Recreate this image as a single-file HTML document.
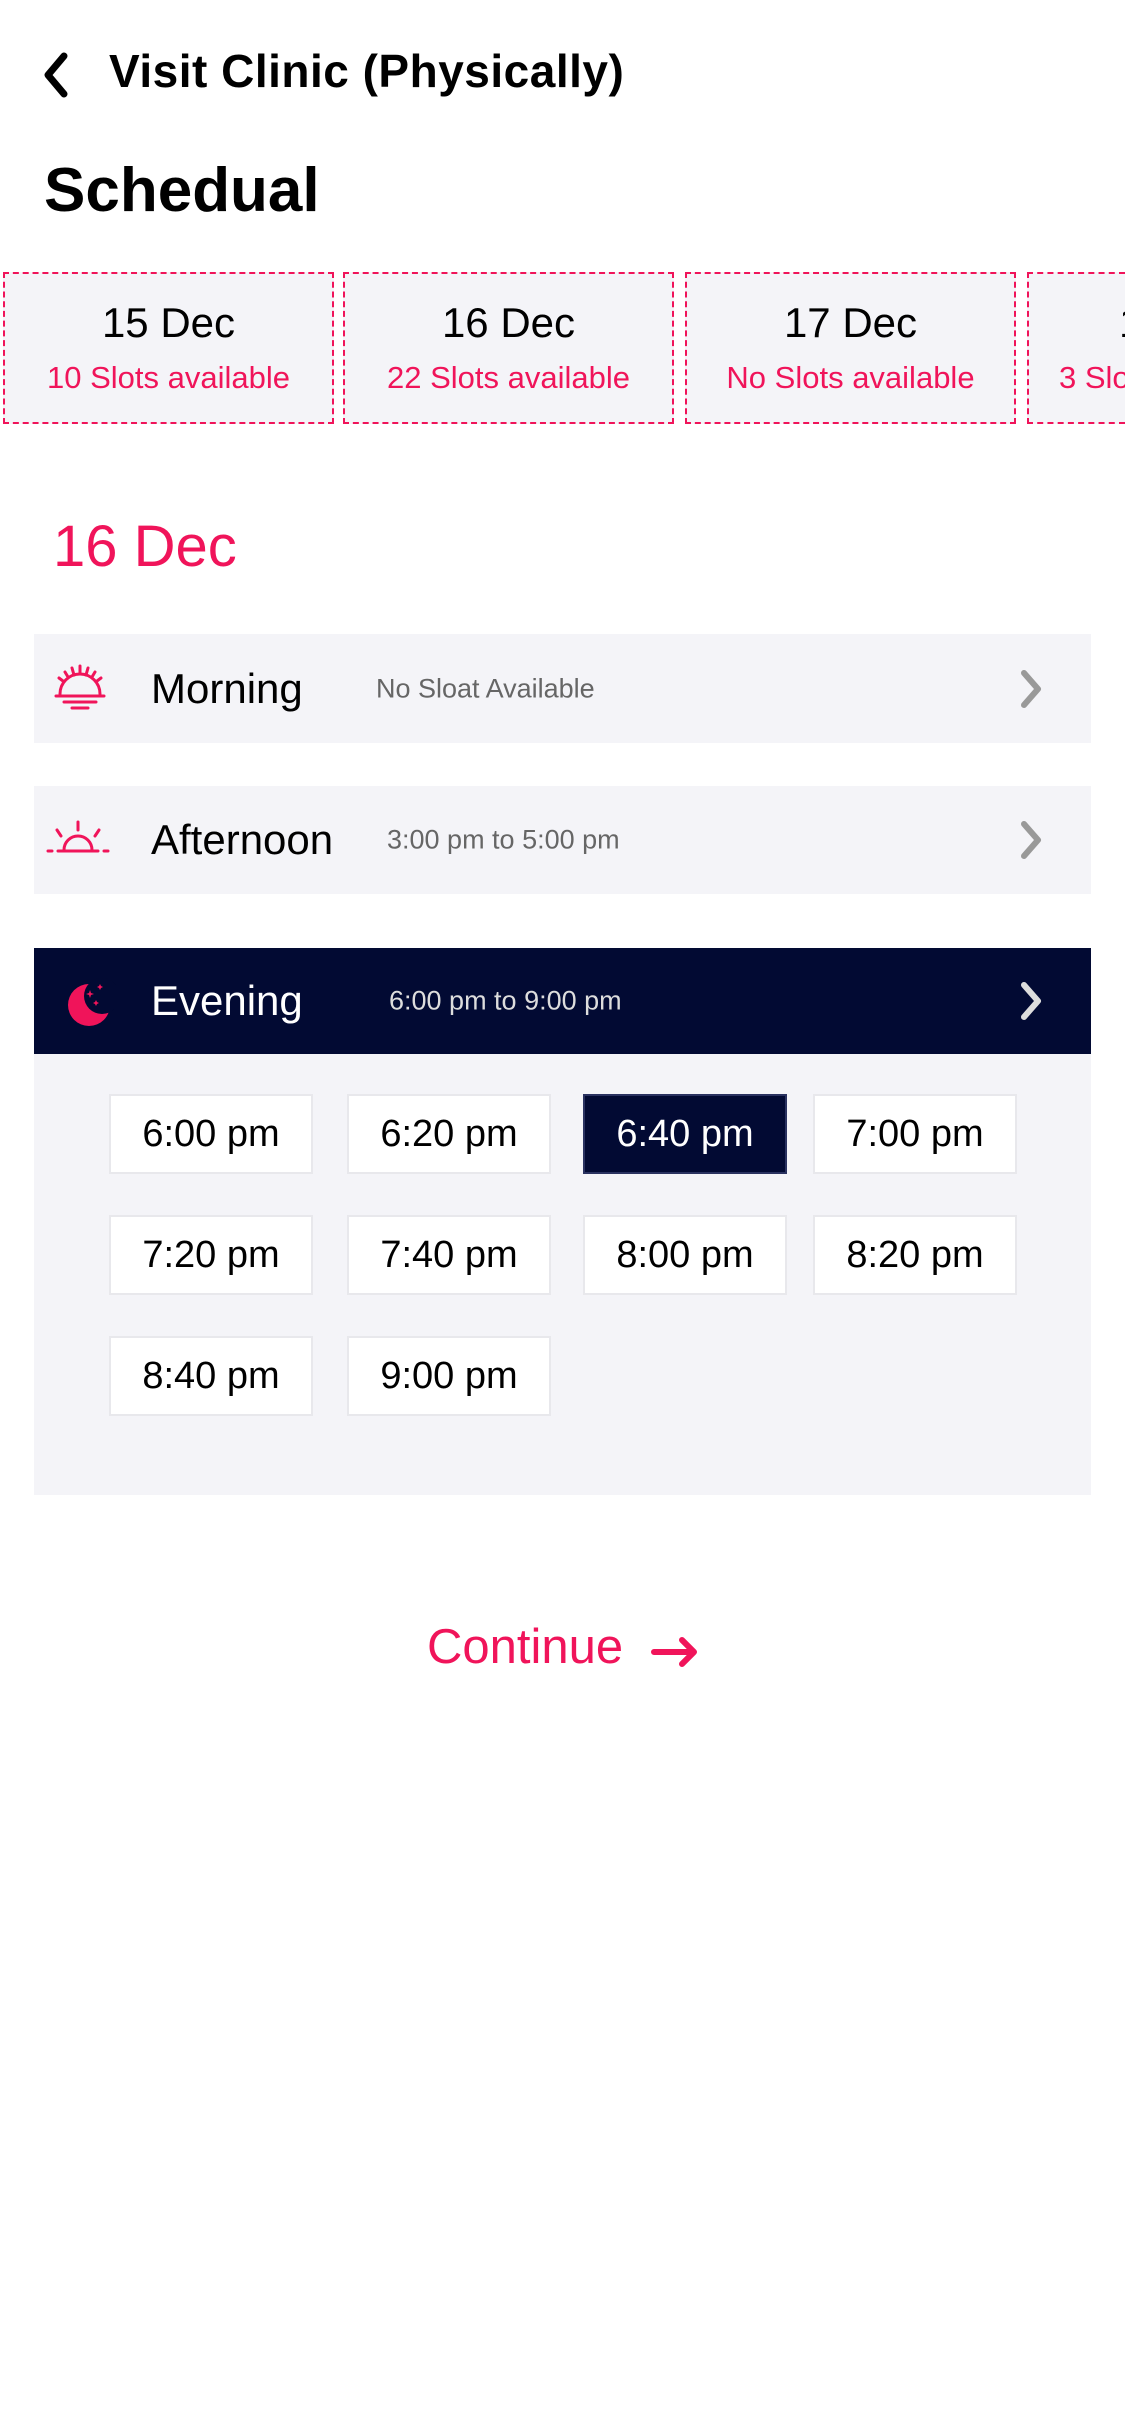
<!DOCTYPE html>
<html><head><meta charset="utf-8"><style>
*{margin:0;padding:0;box-sizing:border-box}
html,body{overflow:hidden}
body{width:1125px;height:2436px;background:#fff;font-family:"Liberation Sans",sans-serif;position:relative;color:#000}
.a{position:absolute;white-space:nowrap}
.card{position:absolute;top:272px;height:152px;width:331px;background:#f4f4f8;border:2px dashed #f0145a;text-align:center;overflow:hidden;white-space:nowrap}
.card .d{font-size:42px;margin-top:24px;line-height:50px}
.card .s{font-size:31px;color:#f0145a;margin-top:12px;line-height:36px}
.row{position:absolute;left:34px;width:1057px;background:#f4f4f8}
.lbl{position:absolute;font-size:42px;top:50%;transform:translateY(-50%)}
.sub{position:absolute;font-size:27px;color:#666;top:50%;transform:translateY(-50%)}
.chev{position:absolute;left:982px;top:50%;transform:translateY(-50%)}
.t{position:absolute;width:204px;height:80px;background:#fff;border:2px solid #e8e8ec;font-size:38px;text-align:center;line-height:76px}
</style></head><body>
<svg class="a" style="left:38px;top:50px" width="34" height="50" viewBox="0 0 34 50"><path d="M26 6 L10 25 L26 44" fill="none" stroke="#000" stroke-width="7" stroke-linecap="round" stroke-linejoin="round"/></svg>
<div class="a" style="left:109px;top:43px;font-size:46px;font-weight:bold;line-height:56px;letter-spacing:0.5px">Visit Clinic (Physically)</div>
<div class="a" style="left:44px;top:156px;font-size:62px;font-weight:bold;line-height:70px">Schedual</div>

<div class="card" style="left:3px"><div class="d">15 Dec</div><div class="s">10 Slots available</div></div>
<div class="card" style="left:343px"><div class="d">16 Dec</div><div class="s">22 Slots available</div></div>
<div class="card" style="left:685px"><div class="d">17 Dec</div><div class="s">No Slots available</div></div>
<div class="card" style="left:1027px;width:98px;text-align:left;border-right:none"><div class="d" style="padding-left:90px">18 Dec</div><div class="s" style="padding-left:30px">3 Slots available</div></div>

<div class="a" style="left:53px;top:514px;font-size:58px;color:#f0145a;line-height:66px">16 Dec</div>

<div class="row" style="top:634px;height:109px">
<svg class="a" style="left:18px;top:30px" width="56" height="50" viewBox="0 0 56 50"><g stroke="#f0145a" stroke-width="3" fill="none" stroke-linecap="round"><path d="M8 30 A20 20 0 0 1 48 30"/><path d="M4 32 H52"/><path d="M12 38 H44"/><path d="M20 44 H36"/><path d="M28 2 V9"/><path d="M20 4 L22 11"/><path d="M36 4 L34 11"/><path d="M13 8 L16 13"/><path d="M43 8 L40 13"/><path d="M7 14 L11 17"/><path d="M49 14 L45 17"/></g></svg>
<div class="lbl" style="left:117px">Morning</div><div class="sub" style="left:342px">No Sloat Available</div>
<svg class="chev" width="30" height="44" viewBox="0 0 30 44"><path d="M8 6 L22 22 L8 38" fill="none" stroke="#999" stroke-width="6" stroke-linecap="round" stroke-linejoin="round"/></svg>
</div>

<div class="row" style="top:786px;height:108px">
<svg class="a" style="left:12px;top:34px" width="64" height="36" viewBox="0 0 64 36"><g stroke="#f0145a" stroke-width="3" fill="none" stroke-linecap="round"><path d="M18 30 A14 14 0 0 1 46 30"/><path d="M2 31 H6 M12 31 H52 M58 31 H62"/><path d="M32 2 V10"/><path d="M11 10 L15 16"/><path d="M53 10 L49 16"/></g></svg>
<div class="lbl" style="left:117px">Afternoon</div><div class="sub" style="left:353px">3:00 pm to 5:00 pm</div>
<svg class="chev" width="30" height="44" viewBox="0 0 30 44"><path d="M8 6 L22 22 L8 38" fill="none" stroke="#999" stroke-width="6" stroke-linecap="round" stroke-linejoin="round"/></svg>
</div>

<div class="row" style="top:1054px;height:441px"></div>
<div class="row" style="top:948px;height:106px;background:#020a33">
<svg class="a" style="left:32px;top:30px" width="50" height="50" viewBox="0 0 50 50"><circle cx="23" cy="27" r="21" fill="#f0145a"/><circle cx="36" cy="18" r="18" fill="#020a33"/><path d="M24 12 l1 3 3 1 -3 1 -1 3 -1 -3 -3 -1 3 -1z M34 6 l1 2 2 1 -2 1 -1 2 -1 -2 -2 -1 2 -1z M30 22 l1 2 2 1 -2 1 -1 2 -1 -2 -2 -1 2 -1z" fill="#f0145a"/></svg>
<div class="lbl" style="left:117px;color:#fff">Evening</div><div class="sub" style="left:355px;color:#ddd">6:00 pm to 9:00 pm</div>
<svg class="chev" width="30" height="44" viewBox="0 0 30 44"><path d="M8 6 L22 22 L8 38" fill="none" stroke="#ddd" stroke-width="6" stroke-linecap="round" stroke-linejoin="round"/></svg>
</div>

<div class="t" style="left:109px;top:1094px">6:00 pm</div>
<div class="t" style="left:347px;top:1094px">6:20 pm</div>
<div class="t" style="left:583px;top:1094px;background:#020a33;border-color:#2a3260;color:#fff">6:40 pm</div>
<div class="t" style="left:813px;top:1094px">7:00 pm</div>
<div class="t" style="left:109px;top:1215px">7:20 pm</div>
<div class="t" style="left:347px;top:1215px">7:40 pm</div>
<div class="t" style="left:583px;top:1215px">8:00 pm</div>
<div class="t" style="left:813px;top:1215px">8:20 pm</div>
<div class="t" style="left:109px;top:1336px">8:40 pm</div>
<div class="t" style="left:347px;top:1336px">9:00 pm</div>

<div class="a" style="left:427px;top:1619px;font-size:49px;color:#f0145a;line-height:56px">Continue</div>
<svg class="a" style="left:650px;top:1634px" width="50" height="36" viewBox="0 0 50 36"><path d="M4 18 H44 M32 6 L44 18 L32 30" fill="none" stroke="#f0145a" stroke-width="6" stroke-linecap="round" stroke-linejoin="round"/></svg>
</body></html>
